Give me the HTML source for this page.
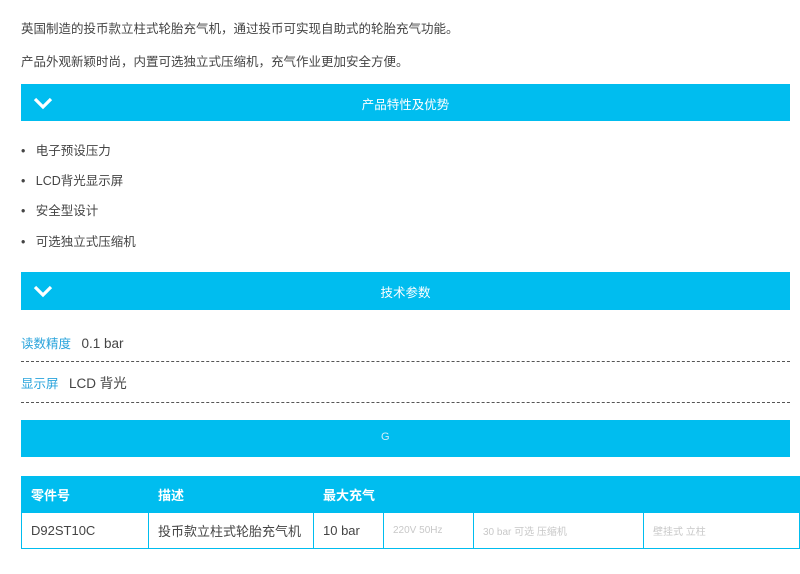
<!DOCTYPE html>
<html><head><meta charset="utf-8"><style>
body{margin:0;width:800px;height:574px;background:#fff;position:relative;overflow:hidden;font-family:"Liberation Sans","Noto Sans CJK SC",sans-serif;color:#444;font-size:12.5px}
.a{position:absolute;white-space:nowrap}
.bar{position:absolute;left:21px;width:769px;background:#00bdef;color:#fff}
.bar .t{position:absolute;left:0;right:0;text-align:center;top:10px;font-size:12.5px}
.bar svg{position:absolute;left:12px;top:11px}
.dash{position:absolute;left:21px;width:769px;border-top:1px dashed #555}
.blue{color:#2aa4dc}
td{border:1px solid #00bdef;padding:0 0 0 9px;height:35px;font-size:13px}
.f{color:#c8c8c8;font-size:10px}
.fh{color:#8fdcf5}
</style></head><body>
<div class="a" style="left:21px;top:18px">英国制造的投币款立柱式轮胎充气机，通过投币可实现自助式的轮胎充气功能。</div>
<div class="a" style="left:21px;top:51px">产品外观新颖时尚，内置可选独立式压缩机，充气作业更加安全方便。</div>
<div class="bar" style="top:84px;height:37px"><svg width="20" height="16" viewBox="0 0 20 16"><path d="M2 4l8 8 8-8" fill="none" stroke="#fff" stroke-width="3.2"/></svg><div class="t">产品特性及优势</div></div>
<div class="a" style="left:21px;top:140px">•&nbsp;&nbsp;&nbsp;电子预设压力</div>
<div class="a" style="left:21px;top:170px">•&nbsp;&nbsp;&nbsp;LCD背光显示屏</div>
<div class="a" style="left:21px;top:200px">•&nbsp;&nbsp;&nbsp;安全型设计</div>
<div class="a" style="left:21px;top:231px">•&nbsp;&nbsp;&nbsp;可选独立式压缩机</div>
<div class="bar" style="top:272px;height:38px"><svg width="20" height="16" viewBox="0 0 20 16"><path d="M2 4l8 8 8-8" fill="none" stroke="#fff" stroke-width="3.2"/></svg><div class="t">技术参数</div></div>
<div class="a" style="left:21px;top:333px"><span class="blue">读数精度</span>&nbsp;&nbsp;&nbsp;<span style="font-size:13.5px">0.1 bar</span></div>
<div class="dash" style="top:361px"></div>
<div class="a" style="left:21px;top:372px"><span class="blue">显示屏</span>&nbsp;&nbsp;&nbsp;<span style="font-size:13.5px">LCD 背光</span></div>
<div class="dash" style="top:402px"></div>
<div class="bar" style="top:420px;height:37px"><div class="a" style="left:360px;top:11px;color:#cfeefa;font-size:11px">G</div></div>
<table style="position:absolute;left:21px;top:476px;width:779px;border-collapse:collapse">
<tr style="background:#00bdef;color:#fff;font-weight:bold"><td style="width:117px;height:33px">零件号</td><td style="width:155px">描述</td><td style="width:60px">最大充气</td><td style="width:80px" class="fh">&nbsp;</td><td style="width:160px" class="fh">&nbsp;</td><td class="fh">&nbsp;</td></tr>
<tr><td>D92ST10C</td><td>投币款立柱式轮胎充气机</td><td>10 bar</td><td class="f">220V 50Hz</td><td class="f">30 bar 可选 压缩机</td><td class="f">壁挂式 立柱</td></tr>
</table>
</body></html>
